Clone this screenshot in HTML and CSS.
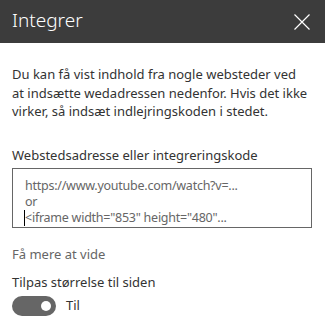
FILE: index.html
```html
<!DOCTYPE html>
<html lang="da">
<head>
<meta charset="utf-8">
<title>Integrer</title>
<link rel="stylesheet" href="styles.css">
</head>
<body>
<div class="panel">
  <header class="header">
    <h1 class="title">Integrer</h1>
    <button class="close" aria-label="Luk">
      <svg width="16" height="16" viewBox="0 0 16 16"><path d="M0.5 0.5L15.5 15.5M15.5 0.5L0.5 15.5" stroke="#fff" stroke-width="1.2" fill="none"/></svg>
    </button>
  </header>
  <div class="content">
    <p class="intro">Du kan få vist indhold fra nogle websteder ved<br>at indsætte wedadressen nedenfor. Hvis det ikke<br>virker, så indsæt indlejringskoden i stedet.</p>
    <label class="label">Webstedsadresse eller integreringskode</label>
    <div class="textbox">
      <div class="placeholder">
        <div class="ph-line">https://www.youtube.com/watch?v=...</div>
        <div class="ph-line">or</div>
        <div class="ph-line"><span class="caret"></span>&lt;iframe width="853" height="480"...</div>
      </div>
    </div>
    <div class="more">Få mere at vide</div>
    <div class="label2">Tilpas størrelse til siden</div>
    <div class="toggle-row">
      <span class="toggle"><span class="knob"></span></span>
      <span class="toggle-text">Til</span>
    </div>
  </div>
</div>
</body>
</html>
```
FILE: styles.css
```css
* { box-sizing: border-box; }
html, body { margin: 0; padding: 0; background: #fff; }
body {
  font-family: "Noto Sans", "Open Sans", sans-serif;
  color: #333;
  width: 325px;
  height: 323px;
  overflow: hidden;
}
.header {
  height: 43px;
  background: #3c3c3c;
  display: flex;
  align-items: center;
  justify-content: space-between;
  padding: 0 15px 0 12px;
}
.title {
  margin: 0;
  font-size: 19px;
  font-weight: 300;
  color: #fff;
  line-height: 1;
  position: relative;
  top: -1px;
}
.close {
  border: 0;
  background: none;
  padding: 0;
  width: 16px;
  height: 16px;
  display: flex;
}
.content {
  padding: 0 12px;
  font-size: 13px;
}
.intro {
  margin: 22px 0 0;
  line-height: 18.5px;
  font-size: 13px;
  white-space: nowrap;
}
.label {
  display: block;
  margin-top: 25px;
  line-height: 19px;
  font-size: 13px;
}
.textbox {
  margin-top: 3px;
  width: 300px;
  height: 60px;
  border: 1px solid #666;
  padding: 9px 12px 0 12px;
  overflow: hidden;
}
.placeholder {
  color: #666;
  font-size: 12.5px;
  letter-spacing: -0.25px;
  white-space: nowrap;
}
.ph-line {
  height: 16px;
  line-height: 16px;
}
.caret {
  display: inline-block;
  width: 1px;
  height: 16px;
  background: #000;
  vertical-align: top;
  margin-left: -1px;
}
.more {
  margin-top: 17px;
  color: #666;
  line-height: 19px;
  font-size: 13px;
}
.label2 {
  margin-top: 9px;
  line-height: 19px;
  font-size: 13px;
}
.toggle-row {
  margin-top: 4px;
  display: flex;
  align-items: center;
  gap: 10px;
}
.toggle {
  width: 44px;
  height: 20px;
  border-radius: 10px;
  background: #666;
  display: flex;
  align-items: center;
  justify-content: flex-end;
  padding-right: 5px;
}
.knob {
  width: 10px;
  height: 10px;
  border-radius: 50%;
  background: #fff;
}
.toggle-text {
  font-size: 13px;
  line-height: 19px;
}
```
